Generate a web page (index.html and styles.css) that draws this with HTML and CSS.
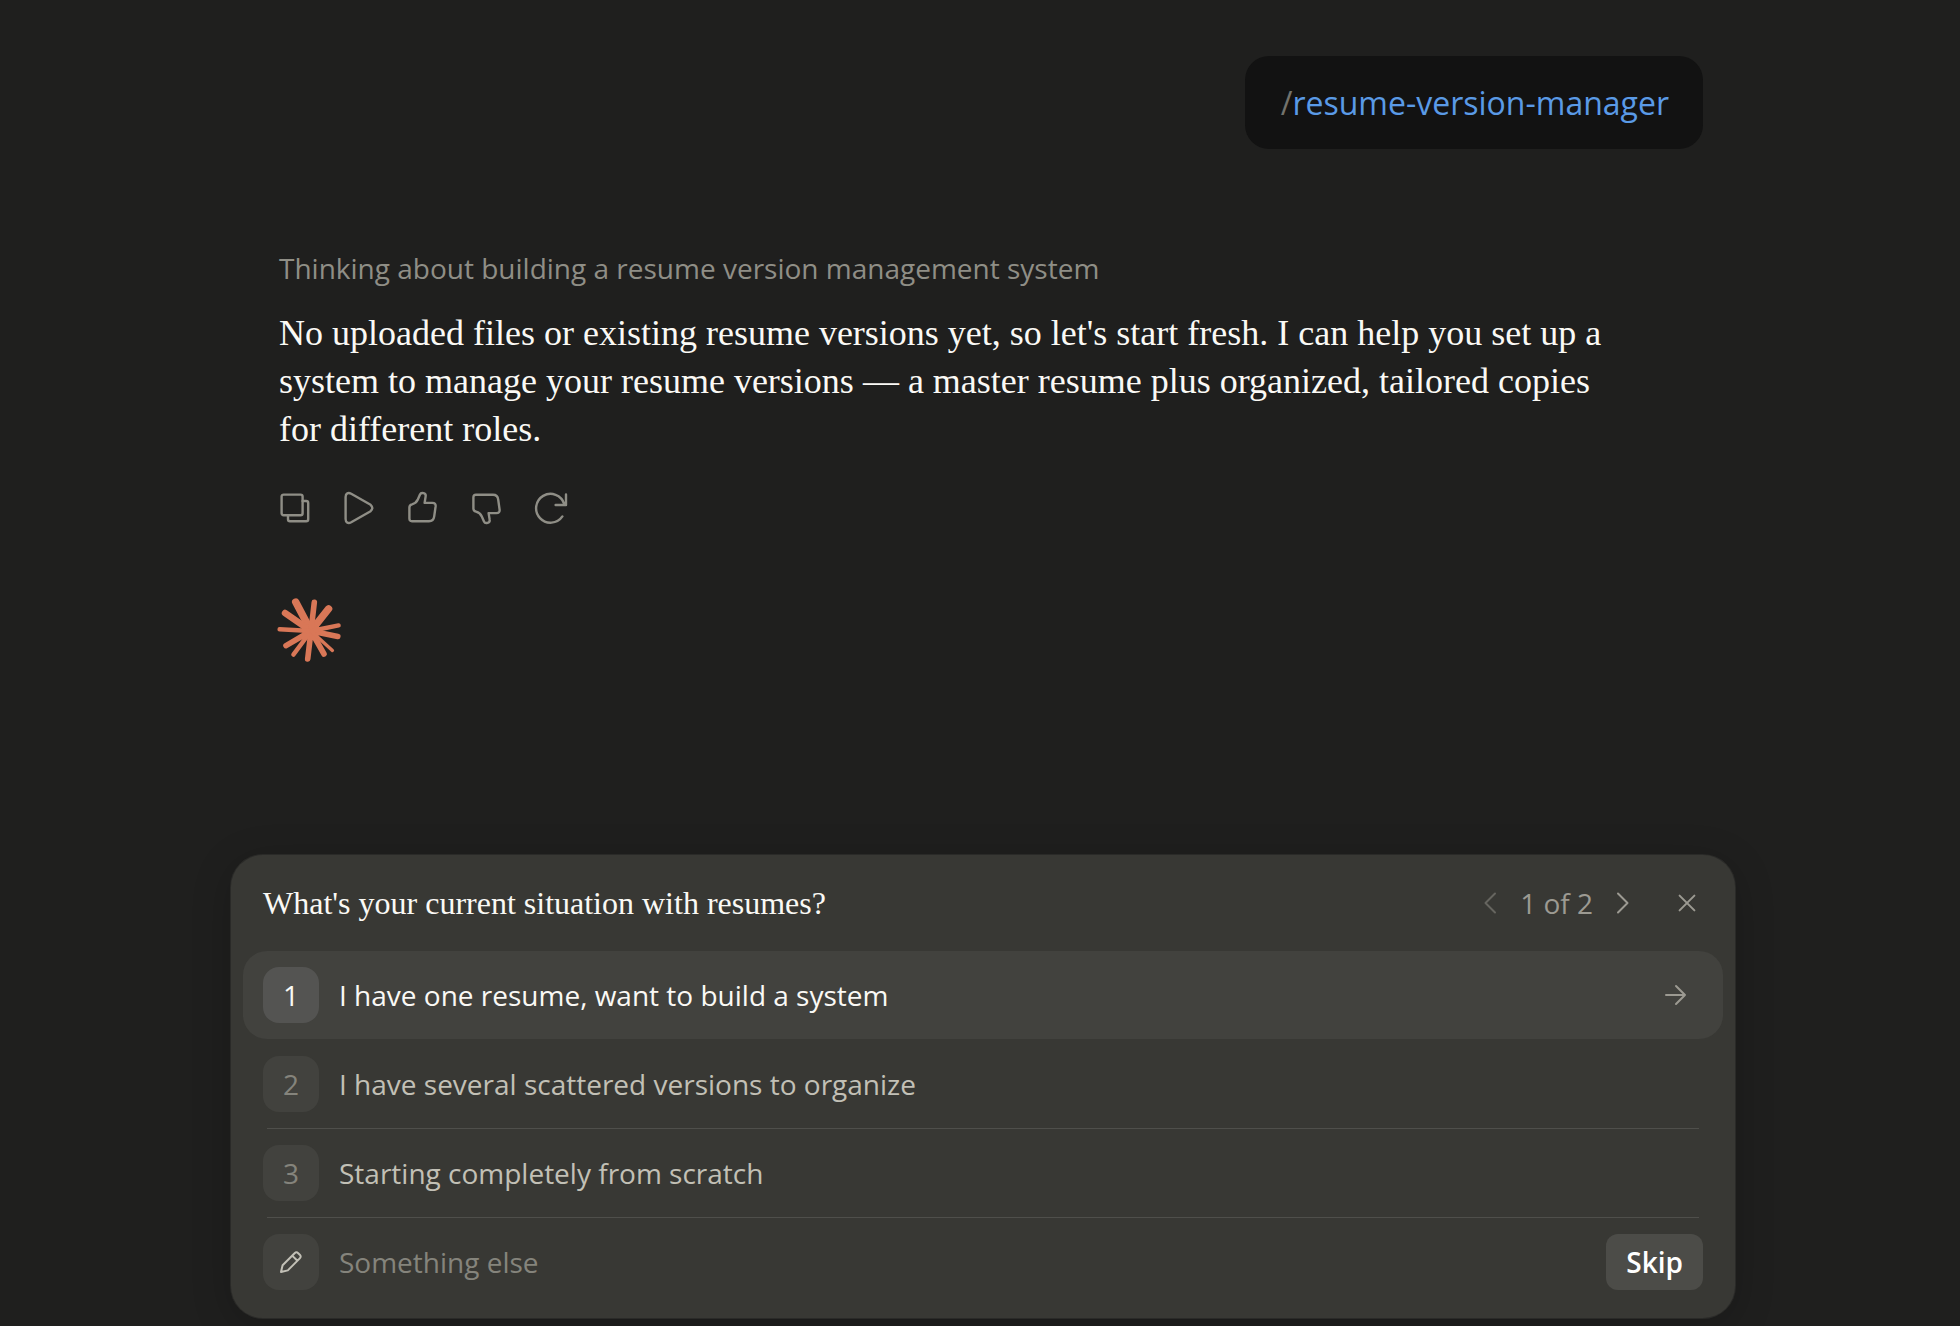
FILE: index.html
```html
<!DOCTYPE html>
<html lang="en">
  <head>
    <meta charset="UTF-8" />
    <meta name="viewport" content="width=device-width, initial-scale=1.0" />
    <title>resume-version-manager</title>
    <link rel="stylesheet" href="styles.css">
  </head>
  <body>
    <main class="page">
      <section class="chat">
        <div class="bubble"><span class="slash">/</span>resume-version-manager</div>

        <p class="thinking">Thinking about building a resume version management system</p>
        <p class="reply">No uploaded files or existing resume versions yet, so let's start fresh. I can help you set up a system to manage your resume versions — a master resume plus organized, tailored copies for different roles.</p>

        <div class="actions">
          <button type="button" aria-label="Copy">
            <svg viewBox="0 0 32 32"><g stroke-width="2.4"><rect x="2.6" y="2.6" width="21" height="20.6" rx="2" /><path d="M23.6 9H27.2Q29.2 9 29.2 11V27.2Q29.2 29.2 27.2 29.2H11Q9 29.2 9 27.2V23.2" /></g></svg>
          </button>
          <button type="button" aria-label="Read aloud">
            <svg viewBox="0 0 32 32"><path stroke-width="2.4" d="M2.6 5C2.6 1.2 5.2.2 8.2 1.8L27.6 12.8Q31 16 27.6 19.2L8.2 30.2C5.2 31.8 2.6 30.8 2.6 27Z" /></svg>
          </button>
          <button type="button" aria-label="Good response">
            <svg viewBox="0 0 32 32"><path stroke-width="2.4" d="M2.4 15.6Q2.4 13 5 12.4Q9.2 11.2 10.8 7.6L13 2.6C14.2-.2 19.4 1 18.6 4.6L17.6 10.9H25.4Q29 10.9 28.6 14.4L27.2 24.4Q26.6 29.2 22 29.2H5Q2.4 29.2 2.4 26.6Z" /></svg>
          </button>
          <button type="button" aria-label="Bad response">
            <svg viewBox="0 0 32 32"><path stroke-width="2.4" transform="matrix(1 0 0 -1 0 32)" d="M2.4 15.6Q2.4 13 5 12.4Q9.2 11.2 10.8 7.6L13 2.6C14.2-.2 19.4 1 18.6 4.6L17.6 10.9H25.4Q29 10.9 28.6 14.4L27.2 24.4Q26.6 29.2 22 29.2H5Q2.4 29.2 2.4 26.6Z" /></svg>
          </button>
          <button type="button" aria-label="Retry">
            <svg viewBox="0 0 32 32"><path stroke-width="2.4" d="M27.4 24.4A14.4 14.4 0 1 1 29.2 11.8L30 13M31 2.4V13H20.6" /></svg>
          </button>
        </div>

        <svg class="logo" viewBox="0 0 64 64" aria-hidden="true">
          <circle cx="34" cy="33" r="9" fill="currentColor" stroke="none" />
          <path stroke-width="7.4" d="M34 33L18.7 4M34 33L51.6 10.8" />
          <path stroke-width="6.4" d="M34 33L8 15" />
          <path stroke-width="5.6" d="M34 33L37.3 4.4M34 33L60.8 38.4M34 33L47 56M34 33L30.7 61M34 33L9 47.6" />
          <path stroke-width="4.4" d="M34 33L61.6 27.4M34 33L16.4 56.6M34 33L2.6 31.3" />
          <path stroke-width="3.4" d="M34 33L55.4 52.4" />
        </svg>
      </section>

      <section class="card">
        <header class="card-head">
          <h2>What's your current situation with resumes?</h2>
          <div class="pager">
            <button type="button" class="prev" aria-label="Previous"><svg viewBox="0 0 24 24"><path d="M17 2.5L7.5 12L17 21.5" /></svg></button>
            <span>1 of 2</span>
            <button type="button" aria-label="Next"><svg viewBox="0 0 24 24"><path d="M7 2.5L16.5 12L7 21.5" /></svg></button>
          </div>
          <button type="button" class="close" aria-label="Close"><svg viewBox="0 0 24 24"><path d="M4.6 4.6L19.4 19.4M19.4 4.6L4.6 19.4" /></svg></button>
        </header>

        <button type="button" class="option active">
          <span class="key">1</span>
          <span class="label">I have one resume, want to build a system</span>
          <svg class="arrow" viewBox="0 0 24 24"><path d="M3 12H22M13 3L22 12L13 21" /></svg>
        </button>
        <button type="button" class="option">
          <span class="key">2</span>
          <span class="label">I have several scattered versions to organize</span>
        </button>
        <button type="button" class="option">
          <span class="key">3</span>
          <span class="label">Starting completely from scratch</span>
        </button>
        <div class="option other">
          <label class="key" for="other" aria-label="Something else"><svg viewBox="0 0 24 24"><path d="M2 22L3.6 15.2L15.6 3.2Q17.4 1.4 19.2 3.2L20.8 4.8Q22.6 6.6 20.8 8.4L8.8 20.4ZM13.2 5.6L18.4 10.8" /></svg></label>
          <input type="text" id="other" placeholder="Something else" />
          <button type="button" class="skip">Skip</button>
        </div>
      </section>
    </main>
  </body>
</html>
```

FILE: styles.css
```css
* {
  box-sizing: border-box;
  margin: 0;
  padding: 0;
}
body {
  background: #1f1f1e;
  color: #faf9f5;
  font-family: "Open Sans", "Noto Sans", sans-serif;
  font-size: 28px;
  line-height: 40px;
}
button,
input {
  background: none;
  border: none;
  color: inherit;
  font: inherit;
}
button {
  cursor: pointer;
}
svg {
  display: block;
  overflow: visible;
  fill: none;
  stroke: currentColor;
  stroke-width: 2;
  stroke-linecap: round;
  stroke-linejoin: round;
}
.page {
  min-height: 100vh;
  padding: 56px 0 8px 6px;
  display: flex;
  flex-direction: column;
  align-items: center;
}
.chat {
  width: 100%;
  max-width: 1440px;
  padding-left: 16px;
  display: flex;
  flex-direction: column;
  align-items: flex-start;
}
.bubble {
  align-self: flex-end;
  padding: 25px 34px 24px 36px;
  border-radius: 24px;
  background: #121212;
  color: #5a9ae6;
  font-size: 32px;
  line-height: 44px;
}
.slash {
  color: #73726c;
}
.thinking {
  margin-top: 99px;
  color: #8f8e86;
}
.reply {
  margin-top: 21px;
  padding-right: 64px;
  font-family: "Liberation Serif", serif;
  font-size: 36px;
  line-height: 48px;
}
.actions {
  display: flex;
  gap: 32px;
  margin-top: 39px;
  color: #8f8e86;
}
.actions svg {
  width: 32px;
  height: 32px;
}
.logo {
  width: 64px;
  height: 64px;
  margin: 74px 0 64px -2px;
  color: #d97757;
}

.card {
  width: 100%;
  max-width: 1504px;
  margin-top: auto;
  padding: 0 12px 12px;
  border-radius: 32px;
  background: #383834;
  box-shadow: 0 0 0 1px #2a2a28, 0 8px 40px rgba(0, 0, 0, 0.2);
}
.card-head {
  height: 96px;
  padding: 0 20px;
  display: flex;
  align-items: center;
}
.card-head h2 {
  flex: 1;
  font-family: "Liberation Serif", serif;
  font-size: 32px;
  font-weight: 400;
}
.pager {
  display: flex;
  align-items: center;
  gap: 18px;
  color: #9c9a92;
}
.pager svg,
.close svg,
.arrow,
.key svg {
  width: 24px;
  height: 24px;
}
.pager .prev {
  color: #66655f;
}
.close {
  margin-left: 36px;
  padding: 0 4px;
  color: #9c9a92;
}

.option {
  width: 100%;
  height: 88px;
  padding: 0 20px;
  display: flex;
  align-items: center;
  gap: 20px;
  color: #c2c0b6;
  text-align: left;
}
/* divider is inset from the row edges */
.option + .option {
  height: 89px;
  border-top: 1px solid transparent;
  background: linear-gradient(#4f4f4b, #4f4f4b) center top / calc(100% - 48px) 1px no-repeat border-box;
}
.option.active {
  border-radius: 24px;
  background: #42423e;
  color: #faf9f5;
}
.option.active + .option {
  background: none;
}
.key {
  width: 56px;
  height: 56px;
  border-radius: 16px;
  background: #42423e;
  color: #85847c;
  display: grid;
  place-items: center;
}
.active .key {
  background: #545452;
  color: #faf9f5;
}
.label {
  flex: 1;
}
.arrow {
  margin-right: 16px;
  color: #9c9a92;
}
.other .key {
  color: #c2c0b6;
}
.other input {
  flex: 1;
  min-width: 0;
  height: 40px;
  outline: none;
}
.other input::placeholder {
  color: #85847c;
  opacity: 1;
}
.skip {
  height: 56px;
  padding: 0 20px;
  border-radius: 12px;
  background: #4c4c48;
  color: #ffffff;
  font-weight: 600;
}
```
